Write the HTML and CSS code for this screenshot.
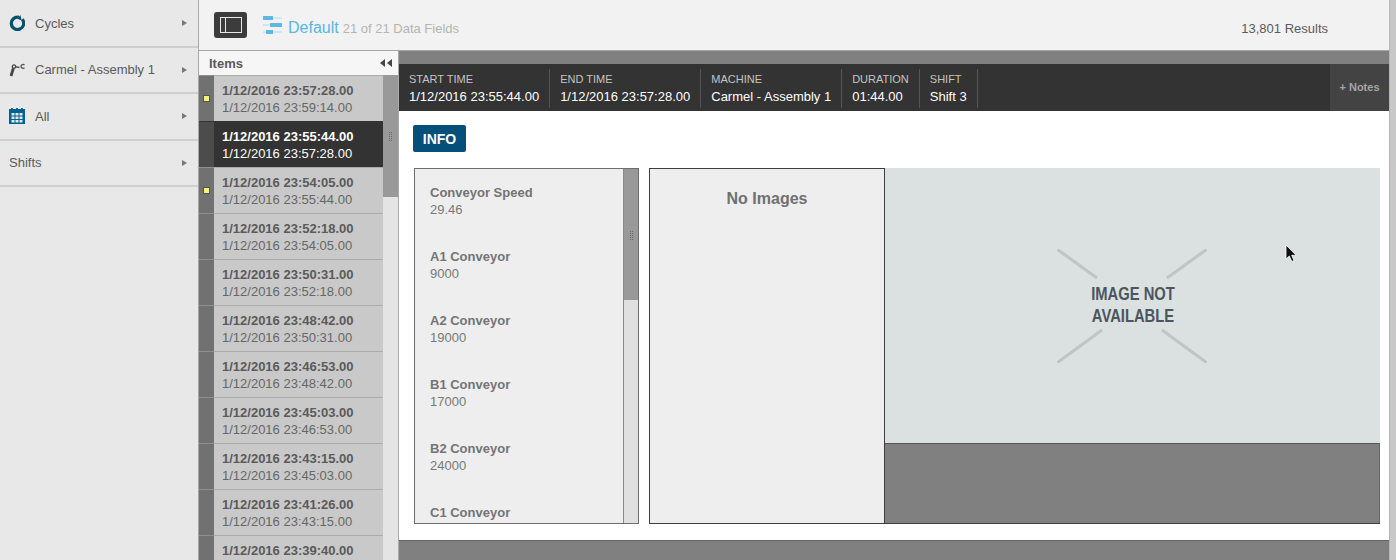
FILE: index.html
```html
<!DOCTYPE html>
<html lang="en">
<head>
<meta charset="utf-8">
<title>Cycles</title>
<link rel="stylesheet" href="styles.css">
</head>
<body>
<div class="app">
  <aside class="sidebar">
    <div class="nav-row">
      <svg class="nav-icon" viewBox="0 0 16 16"><path d="M9.800 2.300A6.200 6.200 0 1 0 13.200 4.300" fill="none" stroke="#04506f" stroke-width="3.200"/><path d="M8.500 3.800 11.500 0 12.500 5.500z" fill="#04506f"/></svg>
      <span class="nav-label">Cycles</span><span class="caret"></span>
    </div>
    <div class="nav-row">
      <svg class="nav-icon" viewBox="0 0 16 16"><path d="M2 14 4.300 6.500" stroke="#444" stroke-width="2.800" fill="none"/><circle cx="5" cy="4.600" r="1.700" fill="none" stroke="#444" stroke-width="1.300"/><path d="M6.500 4.800 10.500 5.600" stroke="#555" stroke-width="1.500" fill="none"/><path d="M15.500 3a2 2 0 1 0 0 2.800" stroke="#555" stroke-width="1.300" fill="none"/></svg>
      <span class="nav-label">Carmel - Assembly 1</span><span class="caret"></span>
    </div>
    <div class="nav-row">
      <svg class="nav-icon" viewBox="0 0 16 16"><rect x="0" y="1" width="16" height="15" fill="#04608f"/><path d="M3 0v2M8 0v2M13 0v2" stroke="#04608f" stroke-width="1.800"/><g fill="#dfe9ef"><rect x="2.500" y="5" width="3" height="2.500"/><rect x="6.500" y="5" width="3" height="2.500"/><rect x="10.500" y="5" width="3" height="2.500"/><rect x="2.500" y="8.500" width="3" height="2.500"/><rect x="6.500" y="8.500" width="3" height="2.500"/><rect x="10.500" y="8.500" width="3" height="2.500"/><rect x="2.500" y="12" width="3" height="2.500"/><rect x="6.500" y="12" width="3" height="2.500"/><rect x="10.500" y="12" width="3" height="2.500"/></g></svg>
      <span class="nav-label">All</span><span class="caret"></span>
    </div>
    <div class="nav-row">
      <span class="nav-label">Shifts</span><span class="caret"></span>
    </div>
  </aside>
  <main class="main">
    <header class="topbar">
      <button class="panel-btn" type="button"><span class="panel-glyph"><span class="panel-left"></span></span></button>
      <svg class="fields-icon" viewBox="0 0 19 18"><path d="M0 2h19M0 9h19M0 16h19" stroke="#a8d9ef" stroke-width="1.200" fill="none"/><g fill="#5db8e2"><rect x="0" y="0" width="10" height="4"/><rect x="7" y="7" width="12" height="4"/><rect x="3" y="14" width="7" height="4"/></g></svg>
      <span class="view-name">Default</span>
      <span class="view-count">21 of 21 Data Fields</span>
      <span class="results">13,801 Results</span>
    </header>
    <div class="workspace">
      <section class="items">
        <div class="items-head"><span>Items</span><span class="collapse"><i></i><i></i></span></div>
        <div class="items-body">
          <div class="item-list">
            <div class="item"><span class="flag"><b></b></span><div class="item-text"><strong>1/12/2016 23:57:28.00</strong><span>1/12/2016 23:59:14.00</span></div></div>
            <div class="item active"><span class="flag"></span><div class="item-text"><strong>1/12/2016 23:55:44.00</strong><span>1/12/2016 23:57:28.00</span></div></div>
            <div class="item"><span class="flag"><b></b></span><div class="item-text"><strong>1/12/2016 23:54:05.00</strong><span>1/12/2016 23:55:44.00</span></div></div>
            <div class="item"><span class="flag"></span><div class="item-text"><strong>1/12/2016 23:52:18.00</strong><span>1/12/2016 23:54:05.00</span></div></div>
            <div class="item"><span class="flag"></span><div class="item-text"><strong>1/12/2016 23:50:31.00</strong><span>1/12/2016 23:52:18.00</span></div></div>
            <div class="item"><span class="flag"></span><div class="item-text"><strong>1/12/2016 23:48:42.00</strong><span>1/12/2016 23:50:31.00</span></div></div>
            <div class="item"><span class="flag"></span><div class="item-text"><strong>1/12/2016 23:46:53.00</strong><span>1/12/2016 23:48:42.00</span></div></div>
            <div class="item"><span class="flag"></span><div class="item-text"><strong>1/12/2016 23:45:03.00</strong><span>1/12/2016 23:46:53.00</span></div></div>
            <div class="item"><span class="flag"></span><div class="item-text"><strong>1/12/2016 23:43:15.00</strong><span>1/12/2016 23:45:03.00</span></div></div>
            <div class="item"><span class="flag"></span><div class="item-text"><strong>1/12/2016 23:41:26.00</strong><span>1/12/2016 23:43:15.00</span></div></div>
            <div class="item"><span class="flag"></span><div class="item-text"><strong>1/12/2016 23:39:40.00</strong></div></div>
          </div>
          <div class="list-scroll"><div class="thumb list-thumb"><span class="grip"></span></div></div>
        </div>
      </section>
      <section class="detail">
        <div class="strip"></div>
        <div class="meta">
          <div class="meta-cell"><small>START TIME</small><span>1/12/2016 23:55:44.00</span></div>
          <div class="meta-cell"><small>END TIME</small><span>1/12/2016 23:57:28.00</span></div>
          <div class="meta-cell"><small>MACHINE</small><span>Carmel - Assembly 1</span></div>
          <div class="meta-cell"><small>DURATION</small><span>01:44.00</span></div>
          <div class="meta-cell"><small>SHIFT</small><span>Shift 3</span></div>
          <div class="notes">+ Notes</div>
        </div>
        <div class="content">
          <button class="info" type="button">INFO</button>
          <div class="panes">
            <div class="fields">
              <div class="field-list">
                <div class="field"><strong>Conveyor Speed</strong><span>29.46</span></div>
                <div class="field"><strong>A1 Conveyor</strong><span>9000</span></div>
                <div class="field"><strong>A2 Conveyor</strong><span>19000</span></div>
                <div class="field"><strong>B1 Conveyor</strong><span>17000</span></div>
                <div class="field"><strong>B2 Conveyor</strong><span>24000</span></div>
                <div class="field"><strong>C1 Conveyor</strong></div>
              </div>
              <div class="field-scroll"><div class="thumb field-thumb"><span class="grip"></span></div></div>
            </div>
            <div class="gallery">
              <div class="thumbs">No Images</div>
              <div class="viewer">
                <div class="placeholder">
                  <svg class="cross" viewBox="0 0 150 114"><path d="M0.500 0.500 40 29M149.500 0.500 110 29M0.500 113.500 45 81M149.500 113.500 105 81" stroke="#bfc4c4" stroke-width="3" fill="none"/></svg>
                  <div class="na-text">IMAGE NOT<br>AVAILABLE</div>
                </div>
                <div class="viewer-foot"></div>
              </div>
            </div>
          </div>
        </div>
        <div class="foot"></div>
      </section>
    </div>
  </main>
  <div class="page-scroll"></div>
</div>
<svg class="cursor" viewBox="0 0 12 18"><path d="M1 1v14l3.300-3 2.500 5.500 2.200-1-2.300-5.200h4.500z" fill="#111" stroke="#fff" stroke-width="0.800"/></svg>
</body>
</html>
```
FILE: styles.css
```css
* { box-sizing: border-box; }
html, body { margin: 0; height: 560px; overflow: hidden; }
body { font-family: "Liberation Sans", Arial, sans-serif; font-size: 13px; color: #555; background: #e8e8e8; }
.app { display: flex; height: 560px; }

.sidebar { width: 199px; flex: none; padding-top: 1px; background: #e8e8e8; border-right: 1px solid #a8a8a8; }
.nav-row { display: flex; align-items: center; height: 46.500px; padding: 0 11px 0 9px; border-bottom: 2px solid #cfcfcf; }
.nav-icon { width: 16px; height: 16px; flex: none; margin-right: 10px; }
.nav-label { flex: 1; font-size: 13px; color: #5a5a5a; }
.caret { width: 0; height: 0; border-left: 5px solid #777; border-top: 3.500px solid transparent; border-bottom: 3.500px solid transparent; }

.main { width: 1190px; flex: none; display: flex; flex-direction: column; }
.topbar { height: 51px; flex: none; display: flex; align-items: center; padding: 0 61px 0 15px; background: #f2f2f2; border-bottom: 1px solid #a6a6a6; }
.panel-btn { width: 33px; height: 26px; padding: 0; border: 0; border-radius: 3px; background: #3c3c3c; display: flex; align-items: center; justify-content: center; margin-right: 16px; }
.panel-glyph { display: flex; width: 22px; height: 16px; border: 1.500px solid #e8e8e8; }
.panel-left { width: 5px; border-right: 1.500px solid #e8e8e8; }
.fields-icon { width: 19px; height: 18px; margin: 0 6px 0 0; flex: none; }
.view-name { font-size: 16px; color: #58b7e3; margin-right: 4px; padding-top: 5px; }
.view-count { flex: 1; font-size: 13px; color: #b4b4b4; padding-top: 6px; }
.results { font-size: 13px; color: #5a5a5a; padding-top: 6px; }

.workspace { flex: 1; display: flex; min-height: 0; }
.items { width: 200px; flex: none; display: flex; flex-direction: column; background: #e4e4e4; border-right: 1px solid #aaa; }
.items-head { height: 24px; flex: none; display: flex; align-items: center; justify-content: space-between; padding: 0 6px 0 10px; background: #f6f6f6; font-weight: 700; font-size: 13px; color: #5a5a5a; }
.collapse { display: flex; gap: 2px; }
.collapse i { width: 0; height: 0; border-right: 5px solid #444; border-top: 4px solid transparent; border-bottom: 4px solid transparent; }
.items-body { flex: 1; display: flex; min-height: 0; }
.item-list { width: 184px; flex: none; }
.item { display: flex; height: 46px; }
.flag { width: 15px; flex: none; display: flex; align-items: center; justify-content: center; background: #717171; border-top: 1px solid #8f8f8f; }
.flag b { width: 7px; height: 7px; background: #f6f17f; border: 1px solid #555; }
.item-text { flex: 1; display: flex; flex-direction: column; padding: 6px 0 0 8px; background: #c9c9c9; border-top: 1px solid #ababab; color: #666; line-height: 17px; font-size: 13px; }
.item-text strong { color: #5a5a5a; }
.item.active .flag { background: #4c4c4c; border-color: #333; }
.item.active .item-text { background: #333; border-color: #333; color: #fff; }
.item.active .item-text strong { color: #fff; }
.list-scroll { width: 15px; flex: none; background: #e4e4e4; }
.thumb { position: relative; background: #999; }
.list-thumb { height: 122px; }
.grip { position: absolute; left: 5px; top: 50%; margin-top: -4px; width: 5px; height: 9px; background: repeating-linear-gradient(90deg, #999 0 1px, transparent 1px 2px), repeating-linear-gradient(0deg, #6a6a6a 0 1px, #999 1px 2px); }

.detail { flex: 1; display: flex; flex-direction: column; min-width: 0; background: #fff; }
.strip { height: 13px; flex: none; background: #808080; }
.meta { height: 47px; flex: none; display: flex; background: #333; }
.meta-cell { display: flex; flex-direction: column; justify-content: center; padding: 0 10px 2px; margin: 5px 0 3px; border-right: 1px solid #555; font-size: 13px; line-height: 17px; color: #fff; }
.meta-cell small { font-size: 11px; color: #c4c4c4; }
.notes { margin-left: auto; width: 59px; padding-bottom: 2px; display: flex; align-items: center; justify-content: center; background: #434343; color: #a5a5a5; font-weight: 700; font-size: 11px; }
.content { flex: 1; min-height: 0; padding: 14px 9px 0 14px; }
.info { display: block; width: 53px; height: 27px; padding: 0; border: 0; border-radius: 2px; background: #04507a; color: #fff; font: 700 14px "Liberation Sans", Arial, sans-serif; }
.panes { display: flex; height: 356px; margin: 16px 0 0 1px; }
.fields { width: 225px; flex: none; display: flex; height: 356px; overflow: hidden; background: #eee; border: 1px solid #6e6e6e; }
.field-list { flex: 1; padding: 15px 0 0 15px; min-width: 0; }
.field { height: 64px; display: flex; flex-direction: column; line-height: 17px; font-size: 13px; color: #787878; }
.field strong { color: #747474; }
.field-scroll { width: 15px; flex: none; background: #e0e0e0; border-left: 1px solid #8a8a8a; }
.field-thumb { height: 131px; }
.gallery { display: flex; flex: 1; margin-left: 10px; border: 1px solid #3e3e3e; border-left-width: 1px; }
.thumbs { width: 235px; flex: none; padding-top: 21px; text-align: center; background: #eee; border-right: 1px solid #3e3e3e; font-weight: 700; font-size: 16px; color: #707070; }
.viewer { flex: 1; display: flex; flex-direction: column; margin: -1px -1px 0 0; }
.placeholder { position: relative; height: 275px; flex: none; background: #dbe0e0; display: flex; align-items: center; justify-content: center; }
.cross { position: absolute; left: 172px; top: 81px; width: 150px; height: 114px; }
.na-text { position: relative; top: -1px; font-weight: 700; font-size: 18px; line-height: 22px; text-align: center; color: #4a5660; transform: scaleX(0.82); }
.viewer-foot { flex: 1; background: #808080; border-top: 1px solid #555; border-right: 1px solid #666; }
.foot { height: 20px; flex: none; background: #808080; border-top: 1px solid #666; margin-top: 16px; }
.page-scroll { flex: 1; background: #c8c8c8; border-left: 1px solid #b5b5b5; }
.cursor { position: absolute; left: 1285px; top: 244px; width: 12px; height: 18px; }
```
